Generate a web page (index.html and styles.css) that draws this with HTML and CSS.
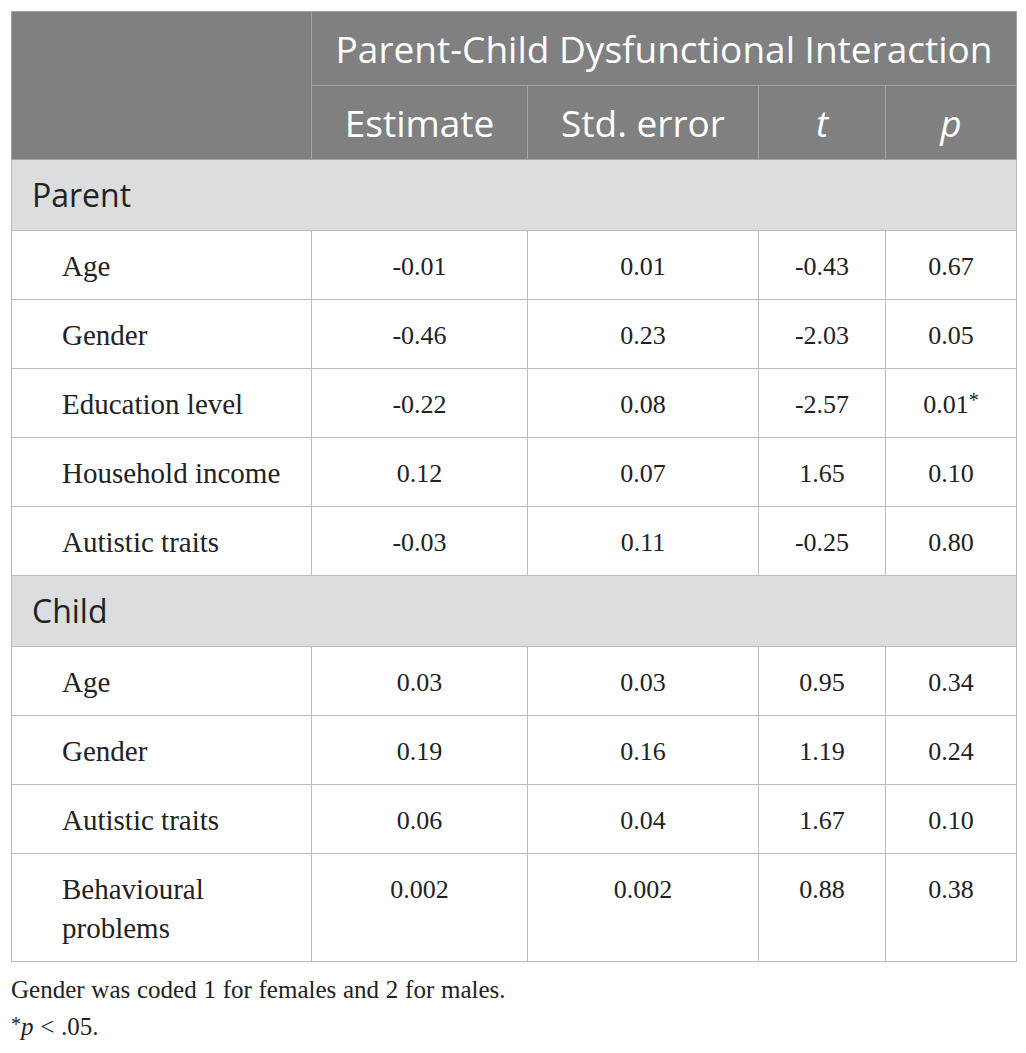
FILE: index.html
```html
<!DOCTYPE html>
<html lang="en">
<head>
  <meta charset="UTF-8" />
  <title>Parent-Child Dysfunctional Interaction</title>
  <link rel="stylesheet" href="styles.css">
</head>
<body>

  <table class="stats-table">
    <colgroup>
      <col class="col-label">
      <col class="col-est">
      <col class="col-se">
      <col class="col-t">
      <col class="col-p">
    </colgroup>
    <thead>
      <tr>
        <th rowspan="2"></th>
        <th colspan="4" class="group-head">Parent-Child Dysfunctional Interaction</th>
      </tr>
      <tr>
        <th>Estimate</th>
        <th>Std. error</th>
        <th><i>t</i></th>
        <th><i>p</i></th>
      </tr>
    </thead>
    <tbody>
      <tr class="section-row"><td colspan="5">Parent</td></tr>
      <tr><td>Age</td><td>-0.01</td><td>0.01</td><td>-0.43</td><td>0.67</td></tr>
      <tr><td>Gender</td><td>-0.46</td><td>0.23</td><td>-2.03</td><td>0.05</td></tr>
      <tr><td>Education level</td><td>-0.22</td><td>0.08</td><td>-2.57</td><td>0.01<sup>*</sup></td></tr>
      <tr><td>Household income</td><td>0.12</td><td>0.07</td><td>1.65</td><td>0.10</td></tr>
      <tr><td>Autistic traits</td><td>-0.03</td><td>0.11</td><td>-0.25</td><td>0.80</td></tr>
      <tr class="section-row"><td colspan="5">Child</td></tr>
      <tr><td>Age</td><td>0.03</td><td>0.03</td><td>0.95</td><td>0.34</td></tr>
      <tr><td>Gender</td><td>0.19</td><td>0.16</td><td>1.19</td><td>0.24</td></tr>
      <tr><td>Autistic traits</td><td>0.06</td><td>0.04</td><td>1.67</td><td>0.10</td></tr>
      <tr><td>Behavioural<br>problems</td><td>0.002</td><td>0.002</td><td>0.88</td><td>0.38</td></tr>
    </tbody>
  </table>

  <div class="table-notes">
    <p>Gender was coded 1 for females and 2 for males.</p>
    <p><sup>*</sup><i>p</i> &lt; .05.</p>
  </div>

</body>
</html>
```

FILE: styles.css
```css
body {
  margin: 0;
  padding: 11px;
  background: #ffffff;
  font-family: "Liberation Serif", "Times New Roman", serif;
  color: #222;
}

.stats-table {
  border-collapse: collapse;
  table-layout: fixed;
  width: 1005px;
  border: 1px solid #bcbcbc;
}

.col-label { width: 300px; }
.col-est { width: 216px; }
.col-se { width: 231px; }
.col-t { width: 127px; }
.col-p { width: 131px; }

.stats-table thead th {
  background-color: #7f807f;
  color: #ffffff;
  font-family: "Open Sans", "Noto Sans", sans-serif;
  font-weight: 400;
  font-size: 37px;
  line-height: 44px;
  height: 73px;
  padding: 0;
  text-align: center;
  vertical-align: middle;
  border: 1px solid #a3a3a3;
}

.stats-table thead th.group-head {
  padding: 0 4px;
}

.stats-table td {
  border: 1px solid #bcbcbc;
  font-size: 26px;
  line-height: 39px;
  padding: 16px 8px 13px;
  text-align: center;
  vertical-align: top;
}

.stats-table td:first-child {
  text-align: left;
  padding-left: 50px;
  font-size: 29px;
}

.stats-table sup {
  font-size: 20px;
  line-height: 0;
  vertical-align: 6px;
}

.section-row td {
  background-color: #dcdddf;
  font-family: "Open Sans", "Noto Sans", sans-serif;
  line-height: 40px;
  padding: 15px 20px 15px;
  color: #222;
}

.stats-table .section-row td:first-child {
  padding-left: 20px;
  font-size: 32px;
}

.table-notes {
  margin-top: 9px;
  font-size: 25px;
  line-height: 37px;
  word-spacing: 0.5px;
}

.table-notes p {
  margin: 0;
}

.table-notes sup {
  font-size: 20px;
  line-height: 0;
  vertical-align: 4px;
}
```
